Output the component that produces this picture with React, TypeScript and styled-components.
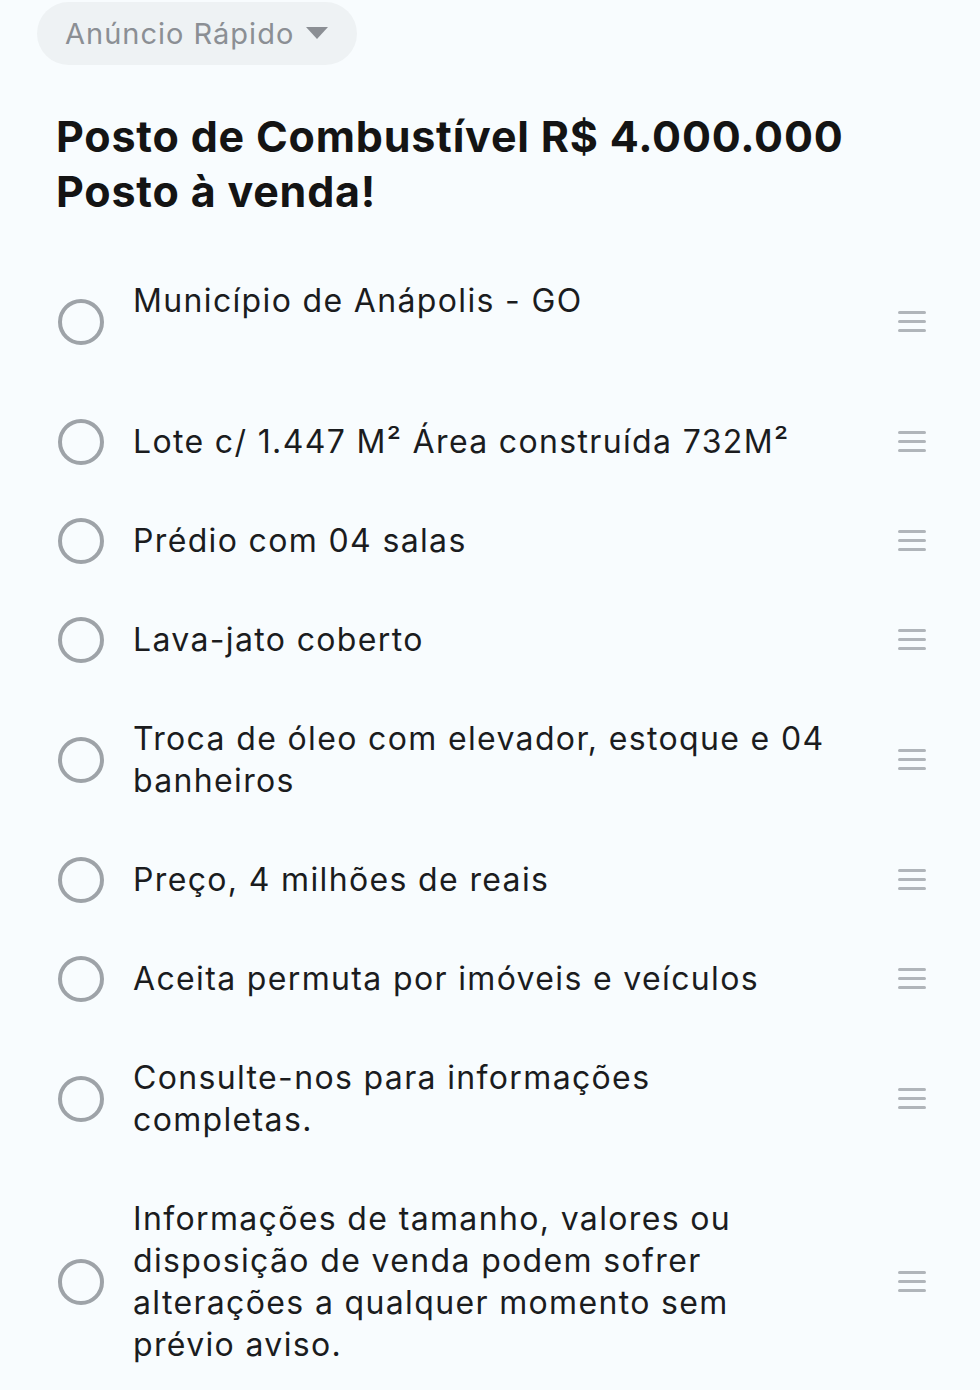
import React from 'react';
import styled, { createGlobalStyle } from 'styled-components';

const GlobalStyle = createGlobalStyle`
    html, body {
        margin: 0;
        padding: 0;
        background: #f8fcfe;
    }
    body {
        font-family: Inter, "Noto Sans", sans-serif;
        color: #1b1c1e;
    }
`;

const Page = styled.div`
    width: 980px;
    min-height: 1390px;
    background: #f8fcfe;
    padding: 2px 0 0 37px;
    box-sizing: border-box;
`;

const TypePill = styled.button`
    display: inline-flex;
    align-items: center;
    gap: 11px;
    height: 63px;
    padding: 0 28px 1px 28px;
    border: none;
    border-radius: 32px;
    background: #eef2f4;
    color: #8b8f94;
    font-family: Inter, "Noto Sans", sans-serif;
    font-size: 29px;
    letter-spacing: 1px;
    cursor: pointer;
`;

const Title = styled.h1`
    margin: 44px 0 0 19px;
    font-size: 43px;
    line-height: 55px;
    font-weight: 700;
    color: #141414;
    letter-spacing: 0.8px;
`;

const List = styled.ul`
    list-style: none;
    margin: 32px 0 0 0;
    padding: 0;
`;

const Row = styled.li`
    display: flex;
    align-items: center;
    padding: 28.5px 0;
`;

const Radio = styled.span`
    flex: none;
    width: 38px;
    height: 38px;
    margin: -2px 0 -2px 21px;
    border: 4px solid #9ea3a8;
    border-radius: 50%;
`;

const ItemText = styled.div`
    flex: none;
    width: 703px;
    margin-left: 29px;
    font-size: 32px;
    line-height: 42px;
    letter-spacing: 1.35px;
    color: #1b1c1e;
    white-space: pre-line;
`;

const Handle = styled.span`
    flex: none;
    margin-left: auto;
    margin-right: 54px;
    display: flex;
    flex-direction: column;
    gap: 6px;
    width: 28px;

    i {
        display: block;
        height: 3px;
        border-radius: 2px;
        background: #b0b5ba;
    }
`;

const Caret = () => (
    <svg width="24" height="14" viewBox="0 0 24 14">
        <path d="M1 1 L23 1 L12 13 Z" fill="#8b8f94" strokeLinejoin="round" />
    </svg>
);

const items = [
    'Município de Anápolis - GO\n\u00a0',
    'Lote c/ 1.447 M² Área construída 732M²',
    'Prédio com 04 salas',
    'Lava-jato coberto',
    'Troca de óleo com elevador, estoque e 04 banheiros',
    'Preço, 4 milhões de reais',
    'Aceita permuta por imóveis e veículos',
    'Consulte-nos para informações completas.',
    'Informações de tamanho, valores ou disposição de venda podem sofrer alterações a qualquer momento sem prévio aviso.',
];

export default function App() {
    return (
        <>
            <GlobalStyle />
            <Page>
                <TypePill>
                    Anúncio Rápido
                    <Caret />
                </TypePill>
                <Title>
                    Posto de Combustível R$ 4.000.000
                    <br />
                    Posto à venda!
                </Title>
                <List>
                    {items.map((text) => (
                        <Row key={text}>
                            <Radio />
                            <ItemText>{text}</ItemText>
                            <Handle>
                                <i />
                                <i />
                                <i />
                            </Handle>
                        </Row>
                    ))}
                </List>
            </Page>
        </>
    );
}
